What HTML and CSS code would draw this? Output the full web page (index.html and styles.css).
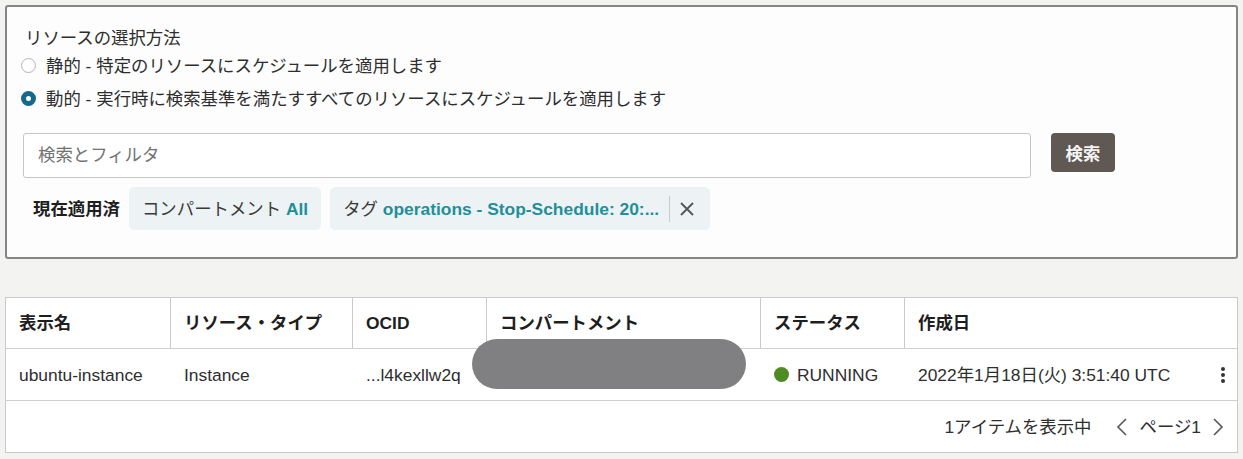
FILE: index.html
```html
<!DOCTYPE html>
<html lang="ja">
<head>
<meta charset="utf-8">
<title>リソースの選択方法</title>
<link rel="stylesheet" href="styles.css">
</head>
<body>
<section class="panel">
  <div class="label">リソースの選択方法</div>
  <div class="radio-row">
    <span class="radio"></span>
    <span>静的 - 特定のリソースにスケジュールを適用します</span>
  </div>
  <div class="radio-row">
    <span class="radio checked"></span>
    <span>動的 - 実行時に検索基準を満たすすべてのリソースにスケジュールを適用します</span>
  </div>
  <div class="search-row">
    <div class="search-input">検索とフィルタ</div>
    <button class="search-btn">検索</button>
  </div>
  <div class="chips-row">
    <span class="applied">現在適用済</span>
    <span class="chip">コンパートメント <b class="val">All</b></span>
    <span class="chip">タグ <b class="val">operations - Stop-Schedule: 20:...</b><span class="sep"></span>
      <svg class="close" width="16" height="16" viewBox="0 0 16 16"><path d="M2 2 L14 14 M14 2 L2 14" stroke="#555" stroke-width="1.8" fill="none"/></svg>
    </span>
  </div>
</section>

<section class="table">
  <div class="row head">
    <div class="cell">表示名</div>
    <div class="cell">リソース・タイプ</div>
    <div class="cell">OCID</div>
    <div class="cell">コンパートメント</div>
    <div class="cell">ステータス</div>
    <div class="cell last">作成日</div>
  </div>
  <div class="row data">
    <div class="cell">ubuntu-instance</div>
    <div class="cell">Instance</div>
    <div class="cell">...l4kexllw2q</div>
    <div class="cell"></div>
    <div class="cell"><span class="dot"></span>RUNNING</div>
    <div class="cell last split"><span>2022年1月18日(火) 3:51:40 UTC</span>
      <span class="kebab"><i></i><i></i><i></i></span>
    </div>
  </div>
  <div class="footer">
    <span class="count">1アイテムを表示中</span>
    <svg class="chev" width="12" height="18" viewBox="0 0 12 18"><path d="M10 1 L2 9 L10 17" stroke="#555" stroke-width="1.6" fill="none"/></svg>
    <span class="page">ページ1</span>
    <svg class="chev" width="12" height="18" viewBox="0 0 12 18"><path d="M2 1 L10 9 L2 17" stroke="#555" stroke-width="1.6" fill="none"/></svg>
  </div>
  <div class="redact"></div>
</section>
</body>
</html>
```

FILE: styles.css
```css
* { box-sizing: border-box; }
body {
  margin: 0;
  background: #f3f3f2;
  font-family: "Liberation Sans", "Noto Sans CJK JP", sans-serif;
  font-size: 17.4px;
  line-height: 22px;
  color: #2e2e2e;
  width: 1243px;
  height: 459px;
  overflow: hidden;
}
.panel {
  margin: 5px 5px 0 5px;
  height: 254px;
  background: #fdfdfd;
  border: 2px solid #858585;
  border-radius: 3px;
  padding: 20px 16px 0 16px;
}
.label {
  line-height: 22px;
  margin-left: 2px;
}
.radio-row {
  display: flex;
  align-items: center;
  gap: 10px;
  height: 33px;
  margin-left: -2px;
}
.radio {
  width: 15px;
  height: 15px;
  border-radius: 50%;
  border: 1px solid #b5b5b5;
  background: #fff;
  flex: none;
}
.radio.checked {
  border: 5px solid #14698c;
  background: #fff;
}
.search-row {
  display: flex;
  align-items: flex-start;
  gap: 20px;
  margin-top: 18px;
}
.search-input {
  width: 1008px;
  height: 45px;
  border: 1px solid #c6c6c6;
  border-radius: 3px;
  background: #fff;
  padding-left: 14px;
  line-height: 43px;
  color: #727272;
}
.search-btn {
  width: 64px;
  height: 39px;
  border: none;
  border-radius: 4px;
  background: #5f5853;
  color: #f4f4f4;
  font-family: inherit;
  font-size: 17.4px;
  font-weight: bold;
  padding: 0;
}
.chips-row {
  display: flex;
  align-items: center;
  gap: 9px;
  margin-top: 9px;
  height: 43px;
}
.applied {
  font-weight: bold;
  color: #1e1e1e;
  margin-left: 10px;
}
.chip {
  height: 43px;
  display: flex;
  align-items: center;
  background: #edf3f4;
  border-radius: 5px;
  padding: 0 13px 0 13px;
  color: #3a3a3a;
  white-space: pre;
}
.val {
  color: #1f8f9a;
  font-weight: bold;
}
.sep {
  width: 1px;
  height: 26px;
  background: #c9c9c9;
  margin: 0 9px 0 10px;
}
.close { margin-right: 2px; }

.table {
  position: relative;
  margin: 38px 5px 0 5px;
  background: #fff;
  border: 1px solid #cacaca;
}
.row {
  display: grid;
  grid-template-columns: 165px 182px 134px 274px 144px 1fr;
  border-bottom: 1px solid #cfcfcf;
}
.row.head { height: 51px; font-weight: bold; color: #1e1e1e; }
.row.data { height: 52px; }
.cell {
  display: flex;
  align-items: center;
  padding-left: 13px;
  white-space: nowrap;
}
.head .cell { border-right: 1px solid #cacaca; }
.head .cell.last { border-right: none; }
.split { justify-content: space-between; padding-right: 12px; }
.dot {
  width: 15px;
  height: 15px;
  border-radius: 50%;
  background: #4f8a23;
  margin-right: 8px;
}
.kebab {
  display: flex;
  flex-direction: column;
  gap: 2px;
}
.kebab i {
  width: 4px;
  height: 4px;
  border-radius: 50%;
  background: #333;
}
.footer {
  height: 51px;
  display: flex;
  align-items: center;
  justify-content: flex-end;
  padding-right: 13px;
  color: #2e2e2e;
}
.count { margin-right: 24px; }
.page { margin: 0 11px 0 12px; }
.redact {
  position: absolute;
  left: 466px;
  top: 41px;
  width: 274px;
  height: 50px;
  border-radius: 25px;
  background: #808083;
}
```
